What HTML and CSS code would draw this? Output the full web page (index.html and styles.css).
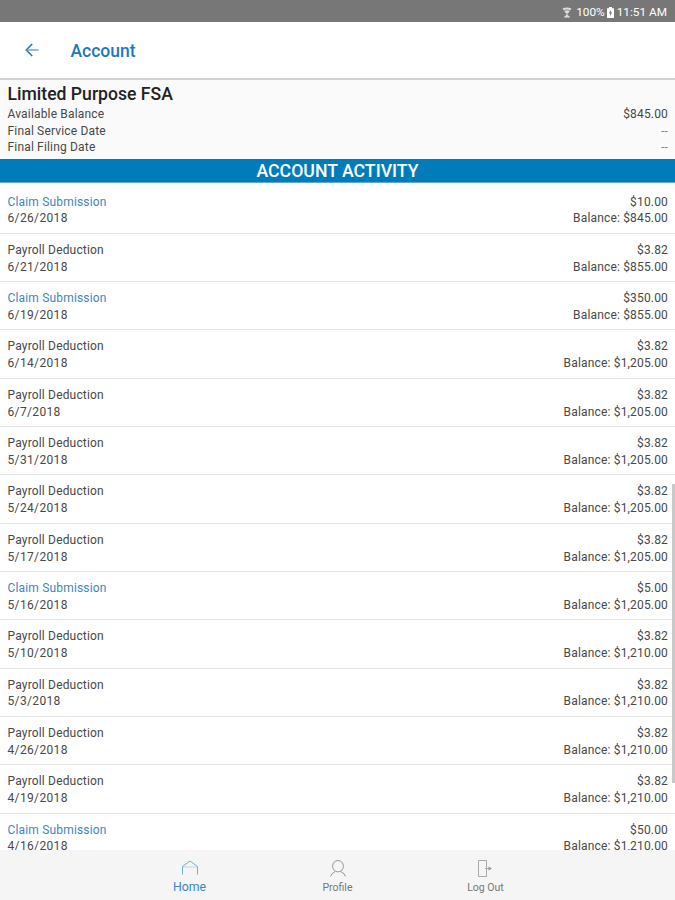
FILE: index.html
```
<!DOCTYPE html>
<html lang="en">
<head>
    <meta charset="UTF-8">
    <meta name="viewport" content="width=device-width, initial-scale=1.0">
    <title>Account</title>
    <link rel="stylesheet" href="styles.css">
</head>
<body>
    <div class="app">
        <div class="status-bar">
            <svg class="wifi-icon" viewBox="0 0 10 11">
                <path d="M0.5 1.5Q5 -0.5 9.5 1.5L6.2 6.2H3.8Z" fill="#ddd"/>
                <path d="M2 3.6Q5 2 8 3.6" fill="none" stroke="#777" stroke-width="0.8"/>
                <path d="M5 6V8M2.5 10L5 8L7.5 10Z" fill="#ddd" stroke="#ddd"/>
            </svg>
            <span class="battery-level">100%</span>
            <svg class="battery-icon" viewBox="0 0 7 11">
                <path d="M2 0H5V1.2H7V11H0V1.2H2Z" fill="#fff"/>
                <path d="M4 3L1.8 6.3H3.2L3 9L5.2 5.5H3.8Z" fill="#777"/>
            </svg>
            <span class="clock">11:51 AM</span>
        </div>
        <header class="header">
            <svg class="back-icon" viewBox="0 0 14 14">
                <path d="M7.2 1L1.2 7L7.2 13" fill="none" stroke="#1b78be" stroke-width="1.5"/>
                <path d="M1.5 7H13.5" fill="none" stroke="#5fa0d2" stroke-width="1.4"/>
            </svg>
            <h1 class="title">Account</h1>
        </header>
        <section class="summary">
            <h2 class="plan-name">Limited Purpose FSA</h2>
            <div class="line"><span>Available Balance</span><span>$845.00</span></div>
            <div class="line"><span>Final Service Date</span><span class="dash">--</span></div>
            <div class="line"><span>Final Filing Date</span><span class="dash">--</span></div>
        </section>
        <h3 class="activity-title">ACCOUNT ACTIVITY</h3>
        <div class="activity">
            <ul class="activity-list" id="activity-list">
                <!-- transactions are listed here -->
            </ul>
            <div class="scrollbar"></div>
        </div>
        <nav class="tabs">
            <a class="tab active">
                <svg class="tab-icon" viewBox="0 0 18 18">
                    <path d="M1.5 15.5V7.5L9 2L16.5 7.5V15.5" fill="none" stroke="#6faed4"/>
                    <path d="M2 8H16" fill="none" stroke="#a9cde4" stroke-width="0.8"/>
                </svg>
                <span>Home</span>
            </a>
            <a class="tab">
                <svg class="tab-icon" viewBox="0 0 18 18">
                    <ellipse cx="9" cy="7.2" rx="5.4" ry="5.7" fill="none" stroke="#999"/>
                    <path d="M1.5 17.5Q2 14.5 6.3 12.5M16.5 17.5Q16 14.5 11.7 12.5" fill="none" stroke="#999"/>
                </svg>
                <span>Profile</span>
            </a>
            <a class="tab">
                <svg class="tab-icon" viewBox="0 0 18 18">
                    <path d="M9.5 7V1.5H1.5V17.5H9.5V12M9.5 1.5V17.5" fill="none" stroke="#aaa"/>
                    <path d="M8 9.5H14" fill="none" stroke="#aaa"/>
                    <path d="M11.5 7.5L15 9.5L11.5 11.5Z" fill="#999"/>
                </svg>
                <span>Log Out</span>
            </a>
        </nav>
    </div>

    <script>
        const transactions = [
            ["Claim Submission", "6/26/2018", "$10.00", "$845.00"],
            ["Payroll Deduction", "6/21/2018", "$3.82", "$855.00"],
            ["Claim Submission", "6/19/2018", "$350.00", "$855.00"],
            ["Payroll Deduction", "6/14/2018", "$3.82", "$1,205.00"],
            ["Payroll Deduction", "6/7/2018", "$3.82", "$1,205.00"],
            ["Payroll Deduction", "5/31/2018", "$3.82", "$1,205.00"],
            ["Payroll Deduction", "5/24/2018", "$3.82", "$1,205.00"],
            ["Payroll Deduction", "5/17/2018", "$3.82", "$1,205.00"],
            ["Claim Submission", "5/16/2018", "$5.00", "$1,205.00"],
            ["Payroll Deduction", "5/10/2018", "$3.82", "$1,210.00"],
            ["Payroll Deduction", "5/3/2018", "$3.82", "$1,210.00"],
            ["Payroll Deduction", "4/26/2018", "$3.82", "$1,210.00"],
            ["Payroll Deduction", "4/19/2018", "$3.82", "$1,210.00"],
            ["Claim Submission", "4/16/2018", "$50.00", "$1,210.00"]
        ];

        const list = document.getElementById('activity-list');
        transactions.forEach(([type, date, amount, balance]) => {
            const item = document.createElement('li');
            const typeClass = type === 'Claim Submission' ? 'claim' : 'payroll';
            item.className = 'activity-item';
            item.innerHTML = `
                <div class="line"><span class="${typeClass}">${type}</span><span>${amount}</span></div>
                <div class="line"><span class="date">${date}</span><span>Balance: ${balance}</span></div>`;
            list.appendChild(item);
        });
    </script>
</body>
</html>
```
FILE: styles.css
```
* {
    box-sizing: border-box;
}
body {
    margin: 0;
    font-family: Roboto, sans-serif;
    font-size: 12px;
    color: #484848;
    background-color: #fff;
}
.app {
    height: 900px;
    display: flex;
    flex-direction: column;
    overflow: hidden;
}
.status-bar {
    height: 22px;
    flex: none;
    display: flex;
    align-items: center;
    justify-content: flex-end;
    padding: 2px 8px 0 0;
    background-color: #777;
    color: #fff;
    font-size: 11.8px;
}
.wifi-icon {
    width: 10px;
    height: 11px;
    margin-right: 4px;
}
.battery-icon {
    width: 7px;
    height: 11px;
    margin: 0 3px 0 2px;
}
.header {
    height: 58px;
    flex: none;
    display: flex;
    align-items: center;
    padding: 0 25px;
    border-bottom: 2px solid #d2d2d2;
}
.back-icon {
    width: 14px;
    height: 14px;
    margin-right: 31.5px;
}
.title {
    margin: 1px 0 0;
    font-size: 17.5px;
    font-weight: 500;
    color: #1b78be;
}
.summary {
    height: 79px;
    flex: none;
    padding: 4px 7px 0 7.5px;
    background-color: #fafafa;
}
.plan-name {
    margin: 0 0 1px;
    font-size: 17.6px;
    line-height: 21px;
    font-weight: 500;
    color: #222;
}
.line {
    display: flex;
    justify-content: space-between;
    line-height: 16.7px;
    letter-spacing: 0.17px;
}
.date {
    letter-spacing: 0.35px;
}
.dash {
    color: #888;
}
.activity-title {
    height: 24px;
    flex: none;
    margin: 0;
    background-color: #007cbb;
    border-bottom: 1px solid #5fa9d6;
    color: #fff;
    font-size: 17.7px;
    line-height: 25px;
    font-weight: 500;
    text-align: center;
}
.activity {
    flex: 1;
    min-height: 0;
    position: relative;
    overflow: hidden;
}
.activity-list {
    list-style: none;
    padding: 2.5px 0 0;
    margin: 0;
}
.activity-item {
    height: 48.33px;
    padding: 8px 7px 0 7.5px;
    border-bottom: 1px solid #e4e4e4;
}
.claim {
    color: #3d85c6;
}
.scrollbar {
    position: absolute;
    top: 301px;
    right: 0;
    width: 3px;
    height: 299px;
    background-color: #c9c9c9;
}
.tabs {
    height: 50px;
    flex: none;
    display: flex;
    justify-content: center;
    background-color: #f5f5f5;
}
.tab {
    width: 148px;
    display: flex;
    flex-direction: column;
    align-items: center;
    padding-top: 9px;
    font-size: 10.5px;
    line-height: 22px;
    color: #777;
}
.tab.active {
    font-size: 12.3px;
    line-height: 21px;
    color: #3d85c6;
}
.tab-icon {
    width: 18px;
    height: 18px;
}
```
